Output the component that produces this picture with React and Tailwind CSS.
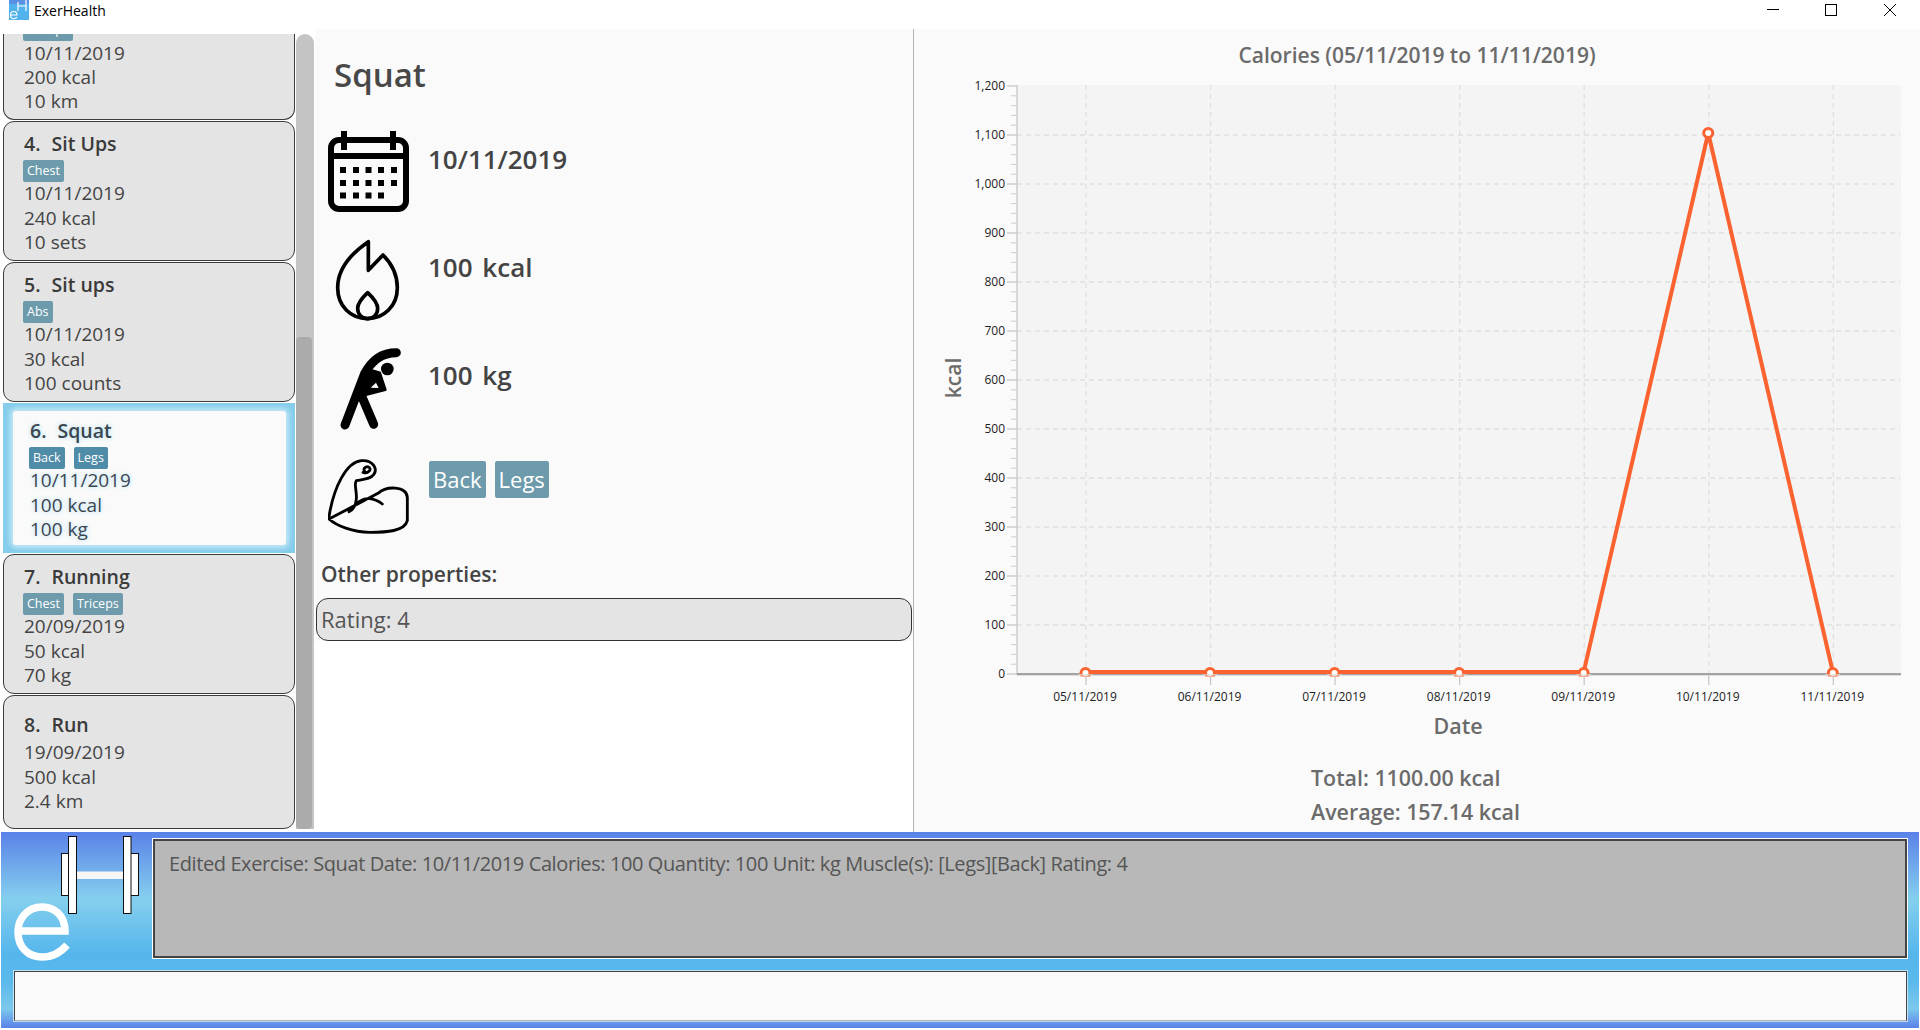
import React from "react";

const Tag = ({ children, selected }) => (
  <span className={`inline-flex h-[22px] items-center rounded-[2px] px-[4px] text-[12.5px] text-white ${selected ? "bg-[#4f8ca8]" : "bg-[#6d9bac]"}`}>
    {children}
  </span>
);

const Card = ({ num, name, tags, lines }) => (
  <div className={`mb-[1px] box-border flex w-[292px] flex-col rounded-[11px] border-[1.5px] border-[#3c3c3c] bg-[#e4e4e4] pl-[20px] text-[19px] leading-[24.4px] text-[#444] ${tags.length ? "h-[140px] pt-[9.5px]" : "h-[134px] pt-[16.5px]"}`}>
    <div className={`text-[19.5px] font-semibold text-[#3a3a3a] ${tags.length ? "mb-[4px]" : "mb-[3.5px]"}`}>
      <span className="mr-[11px]">{num}.</span>{name}
    </div>
    {tags.length > 0 && (
      <div className="-ml-px mb-[-0.5px] flex gap-[9px]">
        {tags.map((t) => <Tag key={t}>{t}</Tag>)}
      </div>
    )}
    {lines.map((l) => <div key={l}>{l}</div>)}
  </div>
);

const ClippedCard = () => (
  <div className="mb-[1px] box-border h-[86px] w-[292px] overflow-hidden rounded-b-[11px] border-x-[1.5px] border-b-[1.5px] border-[#3c3c3c] bg-[#e4e4e4] pl-[20px] text-[19px] leading-[24.4px] text-[#444]">
    <div className="-ml-px -mt-[15px] mb-[-0.5px] flex">
      <Tag>Triceps</Tag>
    </div>
    <div>10/11/2019</div>
    <div>200 kcal</div>
    <div>10 km</div>
  </div>
);

const SelectedCard = () => (
  <div className="mb-[1px] box-border h-[150px] w-[292px] bg-[#84cdec] px-[10px] py-[8px]">
    <div className="box-border flex h-[134px] w-[273px] flex-col rounded-[3px] bg-[#fafafa] pl-[17px] pt-[8px] text-[19px] leading-[24.4px] text-[#3c4650] shadow-[0_0_5px_3px_#c4e8f6] [text-shadow:0_0_5px_#a5dcf2]">
      <div className="text-[19.5px] font-semibold"><span className="mr-[11px]">6.</span>Squat</div>
      <div className="-ml-px mb-[-1px] mt-[4px] flex gap-[9px] [text-shadow:none]">
        <Tag selected>Back</Tag>
        <Tag selected>Legs</Tag>
      </div>
      <div>10/11/2019</div>
      <div>100 kcal</div>
      <div>100 kg</div>
    </div>
  </div>
);

const CalendarIcon = () => (
  <svg width="81" height="81" viewBox="328 131 81 81" className="block">
    <rect x="331" y="140" width="75" height="69" rx="8" fill="none" stroke="#000" strokeWidth="6" />
    <rect x="331" y="153" width="75" height="6" fill="#000" />
    <rect x="341" y="131" width="6" height="19" fill="#000" />
    <rect x="390" y="131" width="6" height="19" fill="#000" />
    {[170, 183, 195.5].map((y, r) =>
      [343, 356, 368.5, 381, 394].slice(0, r === 2 ? 4 : 5).map((x) => (
        <rect key={`${x}-${y}`} x={x - 3} y={y - 3} width="6" height="6" fill="#000" />
      ))
    )}
  </svg>
);

const FlameIcon = () => (
  <svg width="81" height="84" viewBox="57 54 243 252" className="block">
    <path d="M178 62 C130 95 86 140 86 200 C86 255 125 293 175 293 C225 293 265 255 265 200 C265 160 245 125 222 102 L178 148 Z" fill="none" stroke="#000" strokeWidth="11" strokeLinejoin="round" />
    <path d="M176 215 C160 230 146 245 146 262 C146 280 158 293 176 293 C194 293 206 280 206 262 C206 245 192 230 176 215 Z" fill="none" stroke="#000" strokeWidth="11" strokeLinejoin="round" />
  </svg>
);

const StretchIcon = () => (
  <svg width="81" height="84" viewBox="50 375 243 252" className="block">
    <circle cx="228" cy="441" r="19" fill="#000" />
    <path d="M255 392 C215 392 182 412 160 455 L101 609" fill="none" stroke="#000" strokeWidth="27" strokeLinecap="round" />
    <path d="M148 515 L187 607" fill="none" stroke="#000" strokeWidth="27" strokeLinecap="round" />
    <path d="M165 440 L205 452 L222 503 L155 520 L135 500 Z" fill="#000" stroke="#000" strokeWidth="8" strokeLinejoin="round" />
    <path d="M178 497 L194 482 L202 498 Z" fill="#fafafa" />
  </svg>
);

const MuscleIcon = () => (
  <svg width="81" height="78" viewBox="55 712 243 234" className="block">
    <path d="M58 888 C72 800 110 724 155 720 C190 717 205 745 192 762 C182 775 165 775 140 780 C132 790 142 810 140 835 C138 855 130 868 118 873 M140 850 C165 825 195 832 218 850 M205 818 C230 795 290 795 293 830 L293 900 C285 932 230 935 180 935 C130 935 80 915 58 895 Z M160 755 C175 760 190 745 175 738 C165 738 160 745 165 752" fill="none" stroke="#000" strokeWidth="8.5" strokeLinecap="round" strokeLinejoin="round" />
  </svg>
);

const yTicks = [1200, 1100, 1000, 900, 800, 700, 600, 500, 400, 300, 200, 100, 0];
const xDates = ["05/11/2019", "06/11/2019", "07/11/2019", "08/11/2019", "09/11/2019", "10/11/2019", "11/11/2019"];
const xAt = (i) => 1086 + i * 124.55;
const yAt = (v) => 674 - v * 0.49;
const data = [0, 0, 0, 0, 0, 1100, 0];
const ptY = (v) => (v === 0 ? 672 : 133);
const markY = (v) => (v === 0 ? 673 : 133);

const Chart = () => (
  <svg width="1006" height="670" viewBox="914 75 1006 670" className="block">
    <defs>
      <clipPath id="plotclip"><rect x="1000" y="85" width="910" height="591.5" /></clipPath>
    </defs>
    <rect x="1017" y="85" width="884" height="589" fill="#f4f4f4" />
    {yTicks.slice(1, -1).map((v) => (
      <line key={v} x1="1017" x2="1900" y1={yAt(v)} y2={yAt(v)} stroke="#e0e0e0" strokeWidth="1.3" strokeDasharray="5 4" />
    ))}
    {xDates.map((d, i) => (
      <line key={d} x1={xAt(i)} x2={xAt(i)} y1="85" y2="674" stroke="#e0e0e0" strokeWidth="1.3" strokeDasharray="5 4" />
    ))}
    <line x1="1017" x2="1017" y1="85" y2="675" stroke="#c8c8c8" strokeWidth="1.3" />
    {yTicks.map((v) => (
      <g key={v}>
        <line x1="1007" x2="1017" y1={yAt(v)} y2={yAt(v)} stroke="#c8c8c8" strokeWidth="1.3" />
        <text x="1005" y={yAt(v) + 4} textAnchor="end" fontSize="12" fill="#222">{v.toLocaleString("en-US")}</text>
        {v > 0 && [1, 2, 3, 4].map((k) => (
          <line key={k} x1="1011" x2="1017" y1={yAt(v - k * 20)} y2={yAt(v - k * 20)} stroke="#d4d4d4" strokeWidth="1.2" />
        ))}
      </g>
    ))}
    {xDates.map((d, i) => (
      <g key={d}>
        <line x1={xAt(i)} x2={xAt(i)} y1="674" y2="685" stroke="#c8c8c8" strokeWidth="1.3" />
        <text x={xAt(i) - 1} y="701" textAnchor="middle" fontSize="12" fill="#222">{d}</text>
      </g>
    ))}
    <line x1="1017" x2="1901" y1="675.3" y2="675.3" stroke="#dedede" strokeWidth="1.3" />
    <line x1="1017" x2="1901" y1="674" y2="674" stroke="#888" strokeWidth="1.3" />
    <polyline points={data.map((v, i) => `${xAt(i) - 0.5},${ptY(v)}`).join(" ")} fill="none" stroke="#fa6230" strokeWidth="4" strokeLinejoin="miter" />
    <g clipPath="url(#plotclip)">
      {data.map((v, i) => (
        <circle key={i} cx={xAt(i) - 0.5} cy={markY(v)} r="4.5" fill="#fff" stroke="#fa6230" strokeWidth="3" />
      ))}
    </g>
    {data.map((v, i) =>
      v === 0 ? <rect key={i} x={xAt(i) - 8} y="674.3" width="15" height="1.2" fill="#dedede" /> : null
    )}
    <text x="0" y="0" transform="translate(961 378) rotate(-90)" textAnchor="middle" fontSize="21" fontWeight="600" fill="#6b6b6b">kcal</text>
    <text x="1458" y="734" textAnchor="middle" fontSize="21.5" fontWeight="600" fill="#6b6b6b">Date</text>
  </svg>
);

const Logo = () => (
  <svg width="152" height="139" viewBox="1 832 152 139" className="block shrink-0">
    <g fill="#fff" stroke="#111" strokeWidth="1">
      <rect x="61.5" y="853.5" width="8" height="42" />
      <rect x="130.5" y="853.5" width="8" height="42" />
      <rect x="76" y="871.5" width="48" height="7.5" stroke="none" fill="#f6f6f6" />
      <rect x="68.5" y="836.5" width="8" height="77" />
      <rect x="123.5" y="836.5" width="7.5" height="77" />
    </g>
    <path d="M20 931 H65 C65 915 54 907 42 907 C28 907 18 918 18 932 C18 948 29 957 42 957 C52 957 61 952 67 945" fill="none" stroke="#fff" strokeWidth="7.5" />
  </svg>
);

export default function App() {
  return (
    <div className="flex h-[1030px] w-[1920px] flex-col overflow-hidden bg-white font-['Open_Sans',sans-serif]">
      <div className="flex h-[29px] shrink-0 items-start bg-white">
        <svg width="20" height="20" viewBox="0 0 20 20" className="ml-[9px] block">
          <rect width="20" height="20" fill="#52b2ec" />
          <rect x="0" y="0" width="20" height="4" fill="#5a90e4" />
          <path d="M9 2 V11 M17 0 V11 M9 6 H17" stroke="#fff" strokeWidth="1.2" fill="none" />
          <path d="M1.5 15 H8 C8 12.5 6.5 11.5 4.8 11.5 C2.8 11.5 1.5 13 1.5 15 C1.5 17.5 3 18.8 4.8 18.8 C6 18.8 7.2 18.2 8 17.2" stroke="#fff" strokeWidth="1.1" fill="none" />
        </svg>
        <span className="ml-[5px] mt-[1px] text-[14px] leading-[19px] text-black">ExerHealth</span>
        <div className="ml-auto flex h-[20px]">
          <svg width="170" height="20" viewBox="1750 0 170 20" className="block">
            <line x1="1767" x2="1779" y1="9.5" y2="9.5" stroke="#000" />
            <rect x="1825.5" y="4.5" width="11" height="11" fill="none" stroke="#000" />
            <path d="M1884 4 L1896 16 M1896 4 L1884 16" stroke="#000" fill="none" />
          </svg>
        </div>
      </div>

      <div className="flex h-[803px] shrink-0">
        <div className="flex w-[315px] shrink-0 bg-white pt-[5px]">
          <div className="h-[795px] w-[296px] overflow-hidden pl-[3px]">
            <ClippedCard />
            <Card num={4} name="Sit Ups" tags={["Chest"]} lines={["10/11/2019", "240 kcal", "10 sets"]} />
            <Card num={5} name="Sit ups" tags={["Abs"]} lines={["10/11/2019", "30 kcal", "100 counts"]} />
            <SelectedCard />
            <Card num={7} name="Running" tags={["Chest", "Triceps"]} lines={["20/09/2019", "50 kcal", "70 kg"]} />
            <Card num={8} name="Run" tags={[]} lines={["19/09/2019", "500 kcal", "2.4 km"]} />
          </div>
          <div className="flex h-[795px] w-[18px] flex-col rounded-t-[9px] bg-[#c4c4c4] pt-[303px]">
            <div className="w-[16px] flex-1 rounded-[4px] bg-[#ababab]" />
          </div>
        </div>

        <div className="flex w-[599px] shrink-0 flex-col border-r border-[#b4b4b4] bg-white">
          <div className="h-[612px] bg-[#fafafa] text-[#444]">
            <div className="h-[98px] pl-[19px] pt-[20px] text-[33px] font-semibold leading-[52px] text-[#484848]">Squat</div>
            {[
              [<CalendarIcon key="c" />, "10/11/2019"],
              [<FlameIcon key="f" />, "100 kcal"],
              [<StretchIcon key="s" />, "100 kg"],
            ].map(([icon, text]) => (
              <div key={text} className="flex h-[108px] pl-[13px] pt-[4px]">
                <div className="w-[100px]">{icon}</div>
                <div className="pt-[10px] text-[26px] font-semibold leading-[36px] [word-spacing:3px]">{text}</div>
              </div>
            ))}
            <div className="flex h-[108px] pl-[13px] pt-[7px]">
              <div className="w-[101px]"><MuscleIcon /></div>
              <div className="flex gap-[9px] pt-[3px]">
                <span className="flex h-[37px] items-center rounded-[2px] bg-[#6d9bac] px-[4px] text-[22px] text-white">Back</span>
                <span className="flex h-[37px] items-center rounded-[2px] bg-[#6d9bac] px-[4px] text-[22px] text-white">Legs</span>
              </div>
            </div>
            <div className="pl-[6px] text-[21px] font-semibold leading-[30px] text-[#444]">Other properties:</div>
            <div className="ml-[1px] mt-[9px] box-border flex h-[43px] w-[596px] items-center rounded-[12px] border-[1.5px] border-[#333] bg-[#e4e4e4] pl-[4px] text-[22px] text-[#555]">Rating: 4</div>
          </div>
          <div className="flex-1 bg-white" />
        </div>

        <div className="flex-1 bg-[#fafafa]">
          <div className="h-[46px] pt-[10px] text-center text-[21px] font-semibold leading-[32px] text-[#6b6b6b]">Calories (05/11/2019 to 11/11/2019)</div>
          <Chart />
          <div className="pl-[397px] pt-[16px] text-[21.4px] font-semibold leading-[34px] text-[#6b6b6b]">
            <div>Total: 1100.00 kcal</div>
            <div>Average: 157.14 kcal</div>
          </div>
        </div>
      </div>

      <div className="mx-[1px] h-[196px] shrink-0 bg-[linear-gradient(to_bottom,#5a82e8_0%,#85cfee_34%,#56b6ec_62%,#5ab9ec_76%,#7cc9ec_90%,#5a82e8_100%)]">
        <div className="flex h-[139px] items-start">
          <Logo />
          <div className="mt-[7px] box-border h-[119px] w-[1754px] border-2 border-[#444] bg-[#b8b8b8] pl-[14px] pt-[8px] text-[20px] leading-[30px] tracking-[-0.4px] text-[#555] outline outline-1 outline-white">
            Edited Exercise: Squat Date: 10/11/2019 Calories: 100 Quantity: 100 Unit: kg Muscle(s): [Legs][Back] Rating: 4
          </div>
        </div>
        <div className="ml-[13px] box-border h-[50px] w-[1893px] border-[1.5px] border-[#444] border-b-[#b0b0b0] bg-[#fafafa] outline outline-1 outline-white/60" />
      </div>
    </div>
  );
}
